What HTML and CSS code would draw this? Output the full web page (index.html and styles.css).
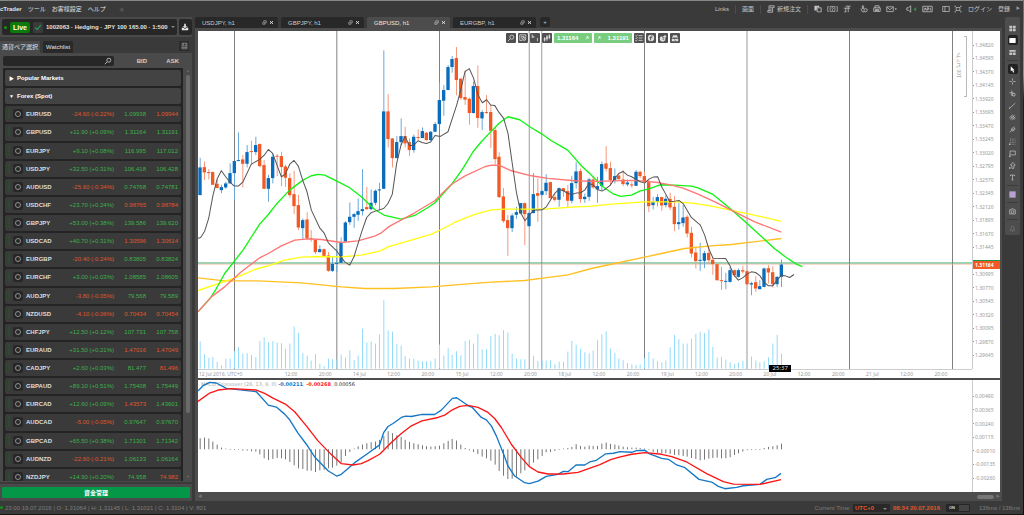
FILE: index.html
```html
<!DOCTYPE html>
<html lang="ja">
<head>
<meta charset="utf-8">
<title>cTrader</title>
<link rel="stylesheet" href="styles.css">
</head>
<body>
<svg class="defs" aria-hidden="true">
  <symbol id="search" viewBox="0 0 20 20"><circle cx="12" cy="8" r="5"/><path d="M8 12l-6 6"/></symbol>
  <symbol id="down" viewBox="0 0 20 20"><path class="solid" d="M8 2h4v6h4l-6 5-6-5h4zM2 12l3-1 5 4 5-4 3 1v6H2z"/></symbol>
  <symbol id="book" viewBox="0 0 20 20"><path d="M3 2h14v16H3zM3 14h14M7 2v8h7V2"/></symbol>
  <symbol id="detach" viewBox="0 0 20 20"><path d="M7 3h10v8H7zM3 9v8h9v-5"/></symbol>
  <symbol id="close" viewBox="0 0 20 20"><path class="thick" d="M4 5l12 10M16 5L4 15"/></symbol>
  <symbol id="order" viewBox="0 0 20 20"><path d="M5 2h13v4h-4v12H2v-4h3zM7 6h5M7 10h5M5 14h6"/></symbol>
  <symbol id="copy" viewBox="0 0 20 20"><path class="solid" d="M1 2h12v4H7v8H1z"/><path d="M8 7h10v10H8z"/></symbol>
  <symbol id="help" viewBox="0 0 32 20"><path d="M5 3H2v14h3M9 3h14v14H9zM27 3h3v14h-3M13 8c1-3 6-2 5 1l-2 2v4"/></symbol>
  <symbol id="pi" viewBox="0 0 20 20"><path d="M7 3h12M2 8h16M7 8v10M13 3v15M3 17h4"/></symbol>
  <symbol id="hand" viewBox="0 0 20 20"><path d="M6 10V2c2-1 3 0 3 2v6M2 9l4 8h5"/><circle cx="14" cy="13" r="4"/></symbol>
  <symbol id="print" viewBox="0 0 20 20"><path d="M5 7V2h10v5M2 7h16v9H2zM5 11h10M5 14h10"/></symbol>
  <symbol id="mail" viewBox="0 0 30 20"><path d="M2 4h18v13H2zM2 5l9 7 9-7M24 9h4l-2 4"/></symbol>
  <symbol id="sound" viewBox="0 0 28 20"><path d="M2 7h4l6-5v16l-6-5H2z"/><path class="green" d="M26 5v11l-7-5z"/></symbol>
  <symbol id="api" viewBox="0 0 28 20"><path d="M2 3h24v14H2zM5 14l3-7 3 7M13 14V7h4v4h-4M21 7v7"/></symbol>
  <symbol id="panel" viewBox="0 0 22 20"><path d="M2 3h18v14H2zM8 3v14"/></symbol>
  <symbol id="expand" viewBox="0 0 22 20"><path d="M6 6h10v8H6zM2 2l4 4M20 2l-4 4M2 18l4-4M20 18l-4-4M2 2h3M17 2h3M2 18h3M17 18h3"/></symbol>
  <symbol id="grid4" viewBox="0 0 20 20"><path class="solid" d="M1 2h8v7H1zM11 2h8v7h-8zM1 11h8v7H1zM11 11h8v7h-8z"/></symbol>
  <symbol id="single" viewBox="0 0 20 20"><path class="solid" d="M1 3h18v14H1z"/></symbol>
  <symbol id="layout3" viewBox="0 0 20 20"><path class="solid" d="M1 3h18v5H1zM1 10h8v7H1zM11 10h8v7h-8z"/></symbol>
  <symbol id="cursor" viewBox="0 0 20 20"><path class="solid" d="M5 1v14l4-3 3 7 3-2-3-5h4z"/></symbol>
  <symbol id="cross" viewBox="0 0 20 20"><path d="M10 1v7M10 12v7M1 10h7M12 10h7"/></symbol>
  <symbol id="crossbox" viewBox="0 0 20 20"><path d="M8 1v16M1 8h12M10 10h7v7h-7z"/></symbol>
  <symbol id="line" viewBox="0 0 20 20"><path d="M3 17L18 3"/><path class="solid" d="M0 16h3v3H0z"/></symbol>
  <symbol id="channel" viewBox="0 0 20 20"><path d="M1 11L11 2M3 15L16 3M7 17L18 8M6 8l10 8M11 5l7 8"/></symbol>
  <symbol id="fork" viewBox="0 0 20 20"><path d="M2 18l6-6M6 9L16 2M8 12l10-6M10 15l8-6M6 9l5 6"/></symbol>
  <symbol id="fib" viewBox="0 0 20 20"><path class="dots" d="M3 3h16M3 8h16M3 13h16M8 18h11"/><path class="solid" d="M0 16h4v4H0z"/></symbol>
  <symbol id="rect" viewBox="0 0 20 20"><path d="M3 3h15v11H3z"/><path class="solid" d="M0 16h4v4H0z"/></symbol>
  <symbol id="arrow" viewBox="0 0 20 20"><path d="M11 1l7 8h-4v9H8V9H4z"/><path class="solid" d="M0 15h4v4H0z"/></symbol>
  <symbol id="text" viewBox="0 0 20 20"><path d="M4 6V3h12v3M10 3v14M7 17h6"/></symbol>
  <symbol id="swatch" viewBox="0 0 20 20"><path class="lilac" d="M1 1h18v18H1z"/></symbol>
  <symbol id="camera" viewBox="0 0 20 20"><path d="M2 5h4l2-3h4l2 3h4v12H2z"/><circle cx="10" cy="11" r="4"/></symbol>
  <symbol id="bell" viewBox="0 0 20 20"><path d="M3 15l3-4V7c0-5 8-5 8 0v4l3 4zM8 18h4"/></symbol>
  <symbol id="gearchart" viewBox="0 0 20 20"><path d="M2 2h15v5M2 2v14h6M5 6h8M5 10h4"/><circle cx="13" cy="12" r="4"/><path d="M10 16l7-8"/></symbol>
  <symbol id="period" viewBox="0 0 20 20"><path d="M3 1v9M3 6h4v4M16 10v8"/></symbol>
  <symbol id="candles" viewBox="0 0 20 20"><path d="M4 8v11M10 3v14M16 1v12"/><path class="solid" d="M2 10h4v6H2zM8 6h4v7H8zM14 3h4v7h-4z"/></symbol>
  <symbol id="list" viewBox="0 0 20 20"><path d="M1 4l2 2 3-4M9 4h10M1 10l2 2 3-4M9 10h10M1 16l2 2 3-4M9 16h10"/></symbol>
  <symbol id="fx" viewBox="0 0 20 20"><circle class="solid" cx="10" cy="10" r="8"/><path class="dark" d="M14 5c-4-1-5 1-5 4v7M6 9h7"/></symbol>
  <symbol id="robot" viewBox="0 0 20 20"><circle class="solid" cx="9" cy="12" r="7"/><path class="dark" d="M8 5c0 5 3 5 6 3M9 13h4"/><circle class="solid" cx="15" cy="6" r="3"/></symbol>
  <symbol id="user" viewBox="0 0 20 20"><path class="solid" d="M5 3h10l2 7H3zM2 12h16v6H2z"/><path class="dark" d="M5 10h10M8 14l4 4"/></symbol>
  <symbol id="ne" viewBox="0 0 20 20"><path class="thick" d="M4 16L15 5M7 4h9v9"/></symbol>
</svg>

<div class="app">
  <header class="menu">
    <nav class="menu-left">
      <strong>cTrader</strong><button>ツール</button><button>お客様設定</button><button>ヘルプ</button><span class="collapse">◀</span>
    </nav>
    <nav class="menu-right" id="menuRight">
      <a href="#links">Links</a><i class="sep"></i><a href="#screen">画面</a><i class="sep"></i>
      <button class="new-order"><svg class="ic"><use href="#order"/></svg>新規注文</button><i class="sep"></i>
      <span class="tools">
        <button aria-label="コピー"><svg class="ic"><use href="#copy"/></svg></button>
        <button aria-label="ヒント"><svg class="ic wide"><use href="#help"/></svg></button>
        <button aria-label="単位"><svg class="ic"><use href="#pi"/></svg></button>
      </span>
      <span class="tools">
        <button aria-label="クイック取引"><svg class="ic"><use href="#hand"/></svg></button>
        <button aria-label="印刷"><svg class="ic"><use href="#print"/></svg></button>
        <button aria-label="メール"><svg class="ic wide"><use href="#mail"/></svg></button>
      </span>
      <span class="tools">
        <button aria-label="音"><svg class="ic wide"><use href="#sound"/></svg></button>
        <button aria-label="API"><svg class="ic wide"><use href="#api"/></svg></button>
      </span>
      <span class="tools tight">
        <button aria-label="パネル"><svg class="ic"><use href="#panel"/></svg></button>
        <button aria-label="全画面"><svg class="ic"><use href="#expand"/></svg></button>
      </span>
      <a href="#login">ログイン</a><a href="#register">登録</a><span class="edge">▶</span>
    </nav>
  </header>

  <div class="body">
    <aside class="sidebar">
      <div class="account">
        <button class="account-box"><i class="dot"></i><b class="live">Live</b><i class="check"><svg viewBox="0 0 20 20"><path d="M3 10l5 5 9-11"/></svg></i><span>1002063 · Hedging · JPY 100 165.00 · 1:500</span><i class="caret"></i></button>
        <button class="deposit" aria-label="入金"><svg class="ic"><use href="#down"/></svg></button>
      </div>
      <div class="side-tabs">
        <button class="side-tab on">通貨ペア選択</button><button class="side-tab">Watchlist</button>
        <button class="side-book" aria-label="表示"><svg class="ic"><use href="#book"/></svg></button>
      </div>
      <div class="side-panel">
        <table class="quotes">
          <thead><tr>
            <th class="find"><label><input type="text" aria-label="検索"><svg class="ic"><use href="#search"/></svg></label></th>
            <th>BID</th><th>ASK</th>
          </tr></thead>
          <tbody id="quotes">
            <tr class="group"><td><button><i>▶</i>Popular Markets</button></td></tr>
            <tr class="group"><td><button><i>▼</i>Forex (Spot)</button></td></tr>
          </tbody>
        </table>
        <div class="scroll"><i>▲</i><span></span><i>▼</i></div>
      </div>
      <div class="fund"><button>資金管理</button></div>
    </aside>

    <main class="work">
      <div class="chart-tabs">
        <div class="chart-tab"><span>USDJPY, h1</span><svg class="ic"><use href="#detach"/></svg><svg class="ic"><use href="#close"/></svg></div>
        <div class="chart-tab"><span>GBPJPY, h1</span><svg class="ic"><use href="#detach"/></svg><svg class="ic"><use href="#close"/></svg></div>
        <div class="chart-tab on"><span>GBPUSD, h1</span><svg class="ic"><use href="#detach"/></svg><svg class="ic"><use href="#close"/></svg></div>
        <div class="chart-tab"><span>EURGBP, h1</span><svg class="ic"><use href="#detach"/></svg><svg class="ic"><use href="#close"/></svg></div>
        <button class="add">+</button>
      </div>
      <div class="frame">
        <section class="price">
          <div class="plot">
            <svg id="chart" viewBox="0 3 2322 1014" preserveAspectRatio="none"></svg>
            <div class="scale"><span>100 ピップ</span></div>
            <span class="countdown">25:37</span>
          </div>
          <div class="axis" id="priceAxis"><b class="tag">1.31164</b></div>
          <div class="times" id="times"><span class="first">12 Jul 2016, UTC+0</span></div>
          <div class="chart-tools">
            <button aria-label="ズーム"><svg class="ic"><use href="#search"/></svg></button>
            <button aria-label="設定"><svg class="ic"><use href="#gearchart"/></svg></button>
            <button aria-label="期間"><svg class="ic"><use href="#period"/></svg></button>
            <button aria-label="種類"><svg class="ic"><use href="#candles"/></svg></button>
            <button class="deal"><span>1.31164</span><svg class="ic"><use href="#ne"/></svg></button>
            <button class="deal"><svg class="ic"><use href="#ne"/></svg><span>1.31191</span></button>
            <button aria-label="一覧"><svg class="ic"><use href="#list"/></svg></button>
            <button aria-label="指標"><svg class="ic"><use href="#fx"/></svg></button>
            <button aria-label="ロボット"><svg class="ic"><use href="#robot"/></svg></button>
            <button aria-label="共有"><svg class="ic"><use href="#user"/></svg></button>
          </div>
        </section>
        <section class="macd">
          <div class="plot">
            <p class="legend"><span>MACD Crossover (26, 13, 9, 0)</span> <b class="blue">-0.00211</b>, <b class="red">-0.00268</b>, <b class="black">0.00056</b></p>
            <svg id="macd" viewBox="0 453 2322 334" preserveAspectRatio="none"></svg>
          </div>
          <div class="axis" id="macdAxis"></div>
        </section>
        <div class="hscroll"><i>◀</i><span></span><i>▶</i></div>
      </div>
    </main>

    <aside class="draw" id="draw"></aside>
  </div>

  <footer class="status">
    <i class="dot"></i><span>23:00 19.07.2016 | O: 1.31064 | H: 1.31145 | L: 1.31021 | C: 1.3104 | V: 801</span>
    <label class="zone">Current Time: <select><option>UTC+0</option></select></label>
    <span class="clock">08:34 20.07.2016</span>
    <button class="toggle"><b>ON</b><i></i></button>
    <span>136ms / 136ms</span>
  </footer>
</div>
<script src="app.js"></script>
</body>
</html>
```
FILE: styles.css
```css
* { box-sizing: border-box; }
html, body { height: 100%; margin: 0; }
body {
  background: linear-gradient(#6d6f70 0 20px, #b86a66 40px, #c77a5a 75px, #2a1530 100px, #1c1428 60%, #111);
  color: #c8c8c8;
  font: 6px/8px "Liberation Sans", "Noto Sans CJK JP", sans-serif;
  overflow: hidden;
}
button, input, select { font: inherit; color: inherit; background: none; border: 0; padding: 0; margin: 0; }
a { color: inherit; text-decoration: none; }
i { font-style: normal; }
.defs { position: absolute; width: 0; height: 0; }
.ic, symbol { fill: none; stroke: currentColor; stroke-width: 2; }
.ic { width: 8px; height: 8px; display: block; flex: none; }
.ic.wide { width: 11px; }
.solid { fill: currentColor; stroke: none; }
.thick { stroke-width: 4; }
.dark { stroke: #444; }
.dots { stroke-dasharray: 2 3; }
.green { fill: #1f9a45; stroke: none; }
.lilac { fill: #b9a0d2; stroke: none; }

.app { height: 100%; margin-right: 1px; display: flex; flex-direction: column; background: #3a3a3a; border-top: 1px solid #868987; border-bottom: 1px solid #151515; }
.menu { height: 16px; display: flex; justify-content: space-between; align-items: center; flex: none; }
.menu-left, .menu-right { display: flex; align-items: center; color: #c4c4c4; }
.menu-left { color: #e2e2e2; gap: 6px; }
.collapse { color: #555; margin-left: 7px; font-size: 5px; }
.sep { width: 1px; height: 9px; background: #4c4c4c; }
.menu-right { gap: 6px; padding-right: 3px; }
.new-order { display: flex; align-items: center; gap: 2px; }
.tools { display: flex; gap: 5px; margin-right: 3px; }
.tools.tight { gap: 4px; margin-right: 0; }
.edge { color: #999; font-size: 4px; }

.body { flex: 1; min-height: 0; display: flex; }
.sidebar { width: 192px; flex: none; display: flex; flex-direction: column; }
.account { display: flex; align-items: center; gap: 2px; height: 20px; padding: 2px 0 2px 2px; background: #4a4a4a; }
.account-box { flex: 1; height: 16px; display: flex; align-items: center; gap: 3px; background: #272727; border-radius: 2px; padding: 0 2px 0 2px; color: #e0e0e0; white-space: nowrap; font-weight: bold; }
.dot { width: 3px; height: 3px; border-radius: 50%; background: #0c9a0c; flex: none; }
.live { background: #0b7a0b; color: #fff; width: 20px; height: 11px; line-height: 11px; border-radius: 2px; font-size: 7px; flex: none; }
.check { width: 10px; height: 11px; background: #3a3a3a; border-radius: 1px; flex: none; }
.check svg { width: 8px; height: 11px; fill: none; stroke: #1b9a58; stroke-width: 3; }
.caret { border: 2px solid transparent; border-top-color: #888; margin: 2px 0 0 auto; }
.deposit { width: 18px; height: 16px; background: #272727; border-radius: 2px; display: grid; place-items: center; color: #e6e6e6; }
.side-tabs { display: flex; align-items: flex-end; height: 16px; gap: 3px; }
.side-tab { height: 12px; padding: 0 3px; background: #292929; color: #e4e4e4; border-radius: 1px 1px 0 0; }
.side-tab.on { background: #4a4a4a; padding: 0 2px; }
.side-book { margin: 0 3px 2px auto; width: 10px; height: 10px; background: #2c2c2c; display: grid; place-items: center; color: #999; }
.side-book .ic { width: 7px; }
.side-panel { flex: 1; min-height: 0; display: flex; gap: 2px; padding: 0 3px 1px; background: #4a4a4a; }
.quotes { flex: 1; display: flex; flex-direction: column; min-height: 0; }
.quotes thead { display: block; }
.quotes thead tr { display: grid; grid-template-columns: 111px 33px 32px; align-items: center; height: 15px; }
.quotes th { padding: 0; text-align: right; color: #d0d0d0; font-size: 6px; }
.find label { display: flex; align-items: center; background: #272727; border-radius: 2px; height: 10px; padding-right: 2px; }
.find input { flex: 1; min-width: 0; height: 10px; outline: 0; }
.quotes tbody { flex: 1; min-height: 0; overflow: hidden; display: grid; gap: 2px; grid-template-rows: repeat(23, calc((100% + 6px) / 23 - 2px)); background: #242424; padding: 2px 2px 0; }
.quotes tbody tr { display: grid; grid-template-columns: 8px 13px 28px 1fr 32px 32px; align-items: center; background: #3a3a3a; border-radius: 2px; padding-right: 3px; }
.quotes tbody tr.group { grid-template-columns: 1fr; background: #434343; }
.group button { display: flex; gap: 5px; padding-left: 4px; color: #fff; font-weight: bold; }
.group i { font-size: 5px; width: 3px; }
.quotes td { padding: 0; text-align: right; }
.quotes td:nth-child(1) { align-self: stretch; }
.bar { display: block; width: 2px; height: 11px; margin: 2px 0 0 3px; background: #2c4a2c; }
.quotes .ring { display: block; width: 10px; height: 10px; border-radius: 2px; background: #272727; padding: 2px; }
.ring i { display: block; width: 6px; height: 6px; border: 1px solid #8f8f8f; border-radius: 50%; }
.quotes .name { text-align: left; color: #dedede; font-weight: bold; }
.group td { text-align: left !important; align-self: center !important; }
.up { color: #3bb24a; }
.dn { color: #e0562c; }
.scroll { width: 6px; display: flex; flex-direction: column; align-items: center; padding-top: 14px; color: #6c6c6c; font-size: 4px; margin-right: -2px; }
.scroll span { width: 4px; flex: 0 1 338px; background: #6a6a6a; border-radius: 2px; }
.scroll i:last-child { margin-top: auto; }
.fund { padding: 3px 2px; margin-top: 2px; background: #4a4a4a; }
.fund button { width: 100%; height: 11px; background: #039747; color: #fff; border-radius: 1px; font-weight: bold; }

.work { flex: 1; min-width: 0; display: flex; flex-direction: column; padding-left: 3px; }
.chart-tabs { display: flex; gap: 3px; height: 11px; flex: none; }
.chart-tab { width: 83px; display: flex; align-items: center; gap: 2px; padding: 0 4px 0 7px; background: #282828; color: #c9c9c9; border-radius: 2px 2px 0 0; }
.chart-tab span { flex: 1; }
.chart-tab .ic { width: 5px; height: 5px; color: #ddd; }
.chart-tab.on { background: #4c4c4c; color: #e8e8e8; }
.add { width: 10px; height: 10px; background: #282828; border-radius: 2px; margin-left: 1px; line-height: 8px; }
.frame { flex: 1; min-height: 0; background: #4d4d4d; padding: 3px 2px 0 3px; display: flex; flex-direction: column; }
.price { position: relative; flex: 348; min-height: 0; background: #fff; display: grid; grid-template: minmax(0, 1fr) 9px / minmax(0, 1fr) 28px; margin-bottom: 2px; }
.plot { position: relative; min-height: 0; min-width: 0; }
.plot svg { display: block; width: 100%; height: 100%; }
.axis { position: relative; display: flex; flex-direction: column; justify-content: space-between; border-left: 1px solid #ccc; padding: 10px 0; color: #999; font: 5px/8px "Noto Sans", sans-serif; }
.axis span { display: flex; align-items: center; gap: 1px; height: 8px; }
.axis span::before { content: ""; width: 1px; height: 1px; background: #999; }
.tag { position: absolute; left: 0; right: 0; top: 67.6%; background: #f15a24; border-top: 1px solid #159a4c; color: #fff; padding-left: 2px; }
.times { display: grid; grid-template-columns: 380fr repeat(20, 171fr) 70fr; border-top: 1px solid #ccc; color: #999; font: 5px/8px "Noto Sans", sans-serif; text-align: center; white-space: nowrap; }
.times .first { text-align: left; padding-left: 1px; }
.countdown { position: absolute; left: 73.8%; bottom: -3px; width: 22px; height: 7px; background: #000; color: #ddd; text-align: center; font: 6px/7px "Noto Sans", sans-serif; z-index: 1; }
.scale { position: absolute; right: 5px; top: 5px; width: 3px; height: 61px; border: 1px solid #bbb; border-left: 0; }
.scale span { position: absolute; right: 3px; top: 16px; writing-mode: vertical-rl; transform: rotate(180deg); color: #999; white-space: nowrap; font-size: 5px; }
.chart-tools { position: absolute; top: 2px; left: 38.4%; display: flex; gap: 2px; }
.chart-tools button { width: 10px; height: 10px; background: #505050; border-radius: 1px; color: #ddd; display: grid; place-items: center; }
.chart-tools .deal { width: 38px; background: #79cd7f; color: #fff; font-weight: bold; display: flex; align-items: center; justify-content: space-between; padding: 0 3px; }
.deal .ic { width: 4px; height: 4px; }
.macd { flex: 112; min-height: 0; background: #fff; display: grid; grid-template-columns: minmax(0, 1fr) 28px; }
.macd .axis { padding: 12px 0 10px; }
.legend { position: absolute; margin: 0; left: 3px; top: 0; color: #aaa; font: 5px/8px "DejaVu Sans", sans-serif; white-space: nowrap; }
.legend .blue { color: #1577c6; }
.legend .red { color: #f22; }
.legend .black { color: #222; font-weight: normal; }
.macd svg { position: relative; }
.hscroll { height: 9px; flex: none; display: flex; align-items: center; gap: 2px; color: #777; font-size: 4px; }
.hscroll span { width: 17px; height: 4px; background: #777; border-radius: 2px; margin-left: auto; }

.draw { width: 15px; margin: 0 3px auto 3px; background: #4d4d4d; border-radius: 2px; display: flex; flex-direction: column; align-items: center; padding: 6px 0 2px; gap: 2px; color: #c4c4c4; }
.draw button { width: 10px; height: 10px; display: grid; place-items: center; border-radius: 2px; }
.draw .ic { width: 7px; height: 7px; }
.draw .on { background: #222; color: #fff; }
.draw hr { width: 11px; height: 1px; border: 0; margin: 1px 0; background: #3c3c3c; }
.draw .off { color: #777; }

.status { height: 13px; flex: none; display: flex; align-items: center; gap: 3px; color: #7d7d7d; padding-right: 3px; }
.status > .dot { margin-right: -1px; }
.zone { position: relative; margin-left: auto; display: flex; align-items: center; gap: 2px; }
.zone select { width: 37px; height: 8px; background: #292929; color: #e0562c; border-radius: 1px; font-weight: bold; padding-left: 2px; appearance: none; }
.zone::after { content: ""; position: absolute; right: 3px; top: 4px; border: 2px solid transparent; border-top-color: #888; }
.clock { color: #e0562c; font-weight: bold; }
.toggle { width: 24px; height: 8px; background: #262626; border-radius: 1px; display: flex; align-items: center; justify-content: space-between; padding: 1px 1px 1px 3px; color: #ddd; margin: 0 6px 0 3px; font-size: 4px; }
.toggle i { width: 10px; height: 6px; background: #444; }
```
FILE: app.js
```js
const pairs = `EURUSD -24.60 (-0.22%) 1.09938u 1.09944d
GBPUSD +11.90 (+0.09%) 1.31164u 1.31191u
EURJPY +9.10 (+0.08%) 116.995u 117.012u
USDJPY +32.50 (+0.31%) 106.418u 106.428u
AUDUSD -25.60 (-0.34%) 0.74768u 0.74781u
USDCHF +23.70 (+0.24%) 0.98765d 0.98784d
GBPJPY +53.00 (+0.38%) 139.586u 139.620u
USDCAD +40.70 (+0.31%) 1.30596d 1.30614d
EURGBP -20.40 (-0.24%) 0.83805u 0.83824u
EURCHF +3.00 (+0.03%) 1.08585u 1.08605u
AUDJPY -3.80 (-0.05%) 79.568u 79.589u
NZDUSD -4.10 (-0.06%) 0.70434d 0.70454d
CHFJPY +12.50 (+0.12%) 107.731u 107.758u
EURAUD +31.50 (+0.21%) 1.47016d 1.47049d
CADJPY +2.60 (+0.03%) 81.477u 81.496d
GBPAUD +89.10 (+0.51%) 1.75408u 1.75449u
EURCAD +12.60 (+0.09%) 1.43573d 1.43601u
AUDCAD -5.00 (-0.05%) 0.97647u 0.97670u
GBPCAD +65.50 (+0.38%) 1.71301u 1.71342u
AUDNZD -22.60 (-0.21%) 1.06133u 1.06164u
NZDJPY +14.90 (+0.20%) 74.958u 74.982d`.split("\n").map(l => l.split(" "));

const cell = v => `<td class="${v.endsWith("u") ? "up" : "dn"}">${v.slice(0, -1)}</td>`;
document.getElementById("quotes").insertAdjacentHTML("beforeend", pairs.map(([n, d, p, b, a]) =>
  `<tr><td><i class="bar"></i></td><td><span class="ring"><i></i></span></td><td class="name">${n}</td>` +
  `<td class="${d[0] === "+" ? "up" : "dn"}">${d} ${p}</td>${cell(b)}${cell(a)}</tr>`).join(""));

// Candles: high, body top, body bottom, low; b = rising, o = falling
const candles = `383,412,495,495b 394,411,427,450o 417,426,429,448o 424,426,464,464o 448,461,474,474o 464,471,480,489b 455,460,472,476b 400,429,460,460b
393,393,429,508b 307,390,393,393b 375,388,401,472o 345,366,401,412b 332,363,366,404o 320,345,366,375b 340,342,408,412o 390,405,476,476o
434,444,476,515b 370,380,444,460b 372,377,380,438o 365,378,411,468o 404,409,443,470o 430,444,495,503o 422,492,528,552o 494,525,592,600o
565,570,594,630b 546,568,625,630o 600,624,627,635o 626,628,666,672o 645,657,666,666b 655,657,680,680o 665,676,722,725o 680,701,722,725b
657,698,700,726b 622,638,698,698b 573,577,634,634b 517,560,576,584b 548,552,560,593b 505,543,554,572b 417,537,543,556b 470,531,537,540o
478,518,537,540b 478,482,518,525b 458,478,481,541b 61,244,476,476b 192,244,327,352o 325,325,384,412o 318,336,384,384b 265,318,336,345b
290,318,340,352o 325,336,360,378o 313,320,360,368b 298,321,324,330o 292,303,324,324b 306,308,330,332o 303,305,330,334b 276,282,305,306b
158,210,282,282b 165,180,212,257b 105,111,180,180b 78,87,111,128b 51,84,150,196o 143,146,204,210o 121,201,209,225o 203,206,249,284o
155,168,249,250b 106,168,264,293o 240,246,265,300b 195,246,249,251o 225,246,302,353o 292,300,387,404o 367,380,501,504o 474,499,573,578o
555,570,594,677o 550,556,594,606b 530,546,554,566b 518,519,550,552b 517,519,552,645o 545,549,588,590b 429,492,549,549b 445,489,497,575o
480,483,494,497b 432,458,483,495b 455,456,504,505o 490,501,509,515o 472,474,509,530b 474,474,483,500o 465,483,512,532o 437,459,512,520b
396,424,459,475b 415,423,507,518o 490,500,507,518b 443,448,500,512b 437,448,472,476o 440,468,478,518b 394,402,468,482b 348,400,416,424o
395,414,450,465o 415,438,450,460b 430,436,447,450o 420,448,462,468o 448,457,463,468b 455,463,465,473o 420,425,467,467b 422,425,438,444o
425,438,456,460o 450,456,528,546o 500,515,525,538b 492,501,515,528b 500,501,526,542o 495,506,525,532b 488,506,532,540o 498,530,582,603o
518,576,582,598b 524,562,579,590b 555,560,610,622o 590,608,670,682o 650,667,693,715o 638,689,692,722b 662,669,692,714b 650,668,690,702o
680,689,702,734o 702,702,750,752o 710,750,753,779o 728,752,755,777b 710,720,755,757b 718,720,735,740o 715,720,740,742b 707,720,724,730o
720,723,762,765o 755,759,763,795b 738,756,775,785o 750,768,777,777b 712,715,770,772b 705,714,727,760o 708,726,762,772o 738,740,762,771b 688,703,740,770b`.split(/\s+/);

const volume = [333,372,383,380,395,405,385,385,363,351,370,369,374,381,333,321,336,333,337,339,356,340,289,308,369,376,391,371,400,408,385,387,390,373,382,360,390,376,295,337,334,340,313,210,301,304,342,346,378,385,385,391,393,393,393,385,343,376,354,374,363,375,333,329,340,311,357,357,318,311,315,300,307,370,385,387,387,412,377,392,391,391,390,402,394,394,364,332,343,356,366,370,361,330,312,303,355,368,385,390,398,402,404,403,384,365,384,393,396,391,351,314,327,340,340,326,311,305,309,297,350,382,380,388,396,402,397,392,390,379,391,396,393,381,340,314,370];

const histogram = [627,625,628,637,646,655,658,661,660,662,664,664,666,667,675,687,692,689,686,687,690,698,708,717,719,724,724,728,723,721,717,715,709,700,680,668,658,651,646,642,639,637,632,620,606,612,618,623,632,638,642,645,648,651,652,651,649,642,635,629,634,646,656,663,668,674,682,687,694,706,725,739,749,748,742,732,723,712,700,690,680,669,668,665,661,658,656,653,645,650,652,649,650,650,643,640,644,646,649,652,654,655,655,656,658,662,668,671,672,672,674,677,678,680,682,686,689,693,691,688,686,685,687,687,684,677,672,667,663,662,661,660,656,653,651,648,643];

const averages = {
  "#ffc020": "0,743 80,752 180,752 310,758 430,770 500,775 590,775 700,770 800,762 880,756 980,751 1040,743 1110,734 1180,715 1250,700 1326,684 1390,670 1460,655 1530,648 1600,643 1660,636 1750,625",
  "#ffff10": "0,781 70,757 125,738 170,718 210,707 260,690 310,681 370,679 430,680 490,675 545,663 570,650 640,630 700,612 730,598 770,577 830,553 880,539 920,537 1040,537 1120,531 1180,528 1250,521 1340,515 1440,515 1490,520 1540,528 1640,549 1700,562 1750,574",
  "#12f312": "0,845 36,805 55,775 80,730 135,660 185,582 211,553 237,520 275,480 315,450 340,437 360,433 380,435 430,460 455,473 490,500 530,538 560,556 610,567 650,556 690,532 711,518 727,500 763,460 795,415 825,365 850,335 885,298 905,278 930,260 965,269 1000,293 1032,312 1060,332 1085,346 1110,361 1150,407 1180,435 1215,470 1245,491 1268,499 1300,495 1327,482 1353,476 1386,464 1430,465 1480,468 1500,473 1545,493 1590,530 1640,573 1700,628 1730,656 1765,682 1795,702 1813,709",
  "#ff7676": "0,845 40,800 80,770 130,725 185,683 211,670 250,647 290,630 330,626 370,628 430,637 480,632 530,618 550,608 575,588 650,548 710,512 760,463 800,438 860,410 880,405 905,406 940,422 1000,437 1050,445 1130,452 1190,454 1300,451 1340,453 1386,458 1420,465 1455,474 1500,492 1560,520 1610,545 1670,575 1750,606"
};
const fastAverage = "0,624 8,622 20,603 32,565 45,495 58,445 70,422 83,440 96,456 109,468 121,468 135,455 160,402 185,388 198,376 211,358 224,370 237,405 250,440 262,432 275,403 288,391 301,408 314,450 327,485 340,540 365,593 378,608 391,638 416,662 425,675 440,695 455,705 468,680 474,660 491,605 506,562 519,548 532,543 557,535 570,520 583,492 596,400 609,345 621,319 634,346 647,346 660,332 672,337 685,340 698,336 711,316 727,319 750,305 763,265 776,225 788,180 801,125 814,116 827,145 840,195 853,218 866,209 878,225 890,226 903,247 917,265 930,310 942,395 955,485 968,548 981,572 994,555 1007,540 1032,539 1045,530 1070,490 1083,478 1096,482 1110,490 1122,493 1134,489 1148,488 1160,480 1173,460 1186,465 1199,478 1212,483 1225,475 1237,465 1250,445 1262,430 1275,424 1288,435 1301,440 1314,448 1327,455 1340,459 1353,447 1366,441 1379,440 1391,470 1405,495 1415,514 1430,513 1443,511 1456,521 1480,562 1507,585 1520,615 1532,655 1545,684 1583,685 1595,705 1608,735 1621,750 1634,743 1647,732 1660,725 1673,727 1686,737 1698,755 1711,767 1724,767 1737,750 1750,736 1762,737 1775,742 1788,733";
const macdLine = "0,486 15,470 35,460 55,462 85,478 175,488 211,528 235,534 260,555 275,572 300,612 325,645 350,683 391,725 416,740 430,735 470,700 506,675 545,647 557,610 570,592 585,583 610,565 623,561 640,562 672,556 710,556 730,543 763,508 776,506 811,530 823,535 850,565 865,572 880,590 895,620 917,675 930,710 950,740 980,760 994,763 1020,755 1045,741 1080,735 1096,726 1110,727 1134,707 1160,707 1175,698 1195,693 1222,674 1246,672 1266,667 1301,669 1316,664 1341,663 1353,673 1391,687 1411,690 1436,707 1461,715 1503,750 1541,758 1561,771 1581,778 1616,774 1636,769 1686,765 1706,750 1731,745 1749,732";
const signalLine = "0,517 35,492 60,483 100,479 175,483 200,493 225,507 262,525 290,548 325,590 360,635 400,676 430,703 465,707 490,703 510,694 545,675 580,640 610,613 640,590 672,575 720,565 740,558 763,542 785,532 810,529 840,535 870,550 890,568 910,595 940,645 970,685 994,712 1020,728 1050,734 1096,734 1140,729 1206,706 1236,692 1261,684 1301,675 1341,670 1391,675 1421,682 1466,698 1526,733 1576,757 1606,764 1686,765 1749,751";

const at = i => Math.round(6 + i * 12.82);
const box = (x, y, w, h, c) => `<rect x="${x}" y="${y}" width="${w}" height="${h}" fill="${c}"/>`;
const line = (pts, c, w) => `<polyline points="${pts}" fill="none" stroke="${c}" stroke-width="${w}" stroke-linejoin="round"/>`;

let out = "";
[109, 416, 724, 1339, 1954, 2263].forEach(x => out += box(x - 1, 0, 3, 1017, "#808080"));
[994, 1031, 1647].forEach(x => out += box(x - 2, 0, 4, 1017, "#b4b4b4"));
volume.forEach((v, i) => out += box(at(i) - 1, v + 600, 3, 415 - v, "#93dbf8"));
out += box(0, 697, 2322, 3, "#3aa76a") + box(0, 701, 2322, 2, "#f7b49c");
candles.forEach((c, i) => {
  const up = c.endsWith("b");
  const [h, t, b, l] = c.slice(0, -1).split(",").map(Number);
  out += box(at(i) - 1, h, 3, l - h, up ? "#6aa9dc" : "#f79a7c");
  out += box(at(i) - 5, t, 10, Math.max(3, b - t), up ? "#0a6cbd" : "#f15a24");
});
for (const c in averages) out += line(averages[c], c, 4);
out += line(fastAverage, "#555", 3);
document.getElementById("chart").innerHTML = out;

document.getElementById("macd").innerHTML =
  histogram.map((v, i) => box(at(i) - 1, Math.min(v, 660), 3, Math.max(2, Math.abs(v - 660)), "#777")).join("") +
  line(macdLine, "#1577c6", 4) + line(signalLine, "#fb1616", 4);

// The label beneath the current-price tag is left empty
const labels = (n, from, step, skip) => Array.from({ length: n }, (_, k) =>
  `<span>${k === skip ? "" : (from - step * k).toFixed(5)}</span>`).join("");
document.getElementById("priceAxis").insertAdjacentHTML("afterbegin", labels(24, 1.3482, 0.00225, 16));
document.getElementById("macdAxis").innerHTML = labels(7, 0.0049, 0.00125, -1);

const days = ["14 Jul", "15 Jul", "18 Jul", "19 Jul", "20 Jul", "21 Jul"];
const times = ["12:00", "20:00"].concat(...days.map(d => [d, "12:00", "20:00"]));
document.getElementById("times").insertAdjacentHTML("beforeend", times.map(t => `<span>${t}</span>`).join(""));

const drawTools = ["grid4", "single*", "layout3", "", "cursor*", "cross", "crossbox", "line", "channel", "fork", "fib", "rect", "arrow", "text", "", "swatch", "", "camera", "", "bell-"];
document.getElementById("draw").innerHTML = drawTools.map(t => {
  if (!t) return "<hr>";
  const id = t.replace(/[*-]$/, "");
  return `<button aria-label="${id}" class="${t.endsWith("*") ? "on" : t.endsWith("-") ? "off" : ""}"><svg class="ic"><use href="#${id}"/></svg></button>`;
}).join("");
```
